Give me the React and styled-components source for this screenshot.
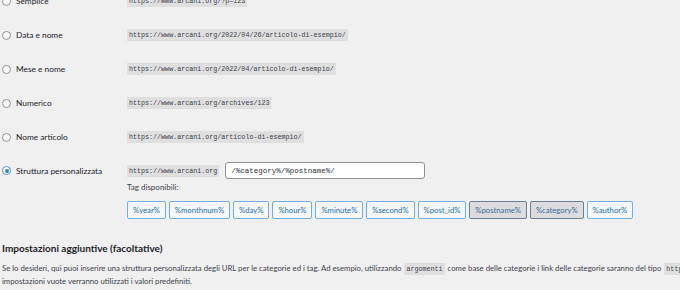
import React from 'react';
import styled, { createGlobalStyle } from 'styled-components';

const Global = createGlobalStyle`
  html, body { margin: 0; padding: 0; background: #f0f0f1; }
  body {
    width: 680px; height: 290px; overflow: hidden;
    font-family: Lato, "Noto Sans", sans-serif;
    color: #1d2327;
  }
`;

const Page = styled.div`
  width: 680px;
  height: 290px;
  overflow: hidden;
  padding-left: 2px;
  box-sizing: border-box;
`;

const Table = styled.div`
  display: flex;
  flex-direction: column;
  margin-top: -16px;
`;

const Row = styled.div`
  display: grid;
  grid-template-columns: 125px 1fr;
  min-height: 34px;
  align-items: ${p => (p.$top ? 'start' : 'center')};
  padding-top: ${p => (p.$top ? '8px' : '0')};
  box-sizing: border-box;
`;

const Label = styled.label`
  display: flex;
  align-items: center;
  gap: 5px;
  height: 17px;
  font-size: 8.3px;
  color: #1d2327;
  white-space: nowrap;
`;

const Radio = styled.span`
  width: 9px;
  height: 9px;
  border-radius: 50%;
  box-sizing: border-box;
  border: 1px solid ${p => (p.$checked ? '#4f94d4' : '#8c8f94')};
  background: #fff;
  display: flex;
  align-items: center;
  justify-content: center;
  flex: none;
  &::after {
    content: '';
    display: ${p => (p.$checked ? 'block' : 'none')};
    width: 4px;
    height: 4px;
    border-radius: 50%;
    background: #3582c4;
  }
`;

const Code = styled.code`
  display: inline-block;
  font-family: "Liberation Mono", "DejaVu Sans Mono", monospace;
  font-size: 6.7px;
  line-height: 8px;
  padding: 2px 2px;
  background: rgba(0, 0, 0, 0.07);
  color: #3c434a;
  white-space: nowrap;
`;

const Value = styled.div`
  display: flex;
  align-items: center;
`;

const Cell = styled.div`
  display: flex;
  flex-direction: column;
  align-items: flex-start;
`;

const Line = styled.div`
  display: flex;
  align-items: center;
  gap: 6px;
  height: 17px;
`;

const Input = styled.div`
  width: 200px;
  height: 17px;
  box-sizing: border-box;
  border: 1px solid #8c8f94;
  border-radius: 3px;
  background: #fff;
  font-family: "Liberation Mono", "DejaVu Sans Mono", monospace;
  font-size: 7.5px;
  color: #2c3338;
  display: flex;
  align-items: center;
  padding: 0 5px;
`;

const Hint = styled.div`
  font-size: 8px;
  line-height: 12px;
  color: #3c434a;
  margin-top: 2px;
`;

const Tags = styled.div`
  display: flex;
  gap: 3px;
  margin-top: 8px;
`;

const Tag = styled.button`
  height: 18px;
  box-sizing: border-box;
  padding: 0 5px;
  border-radius: 2px;
  border: 1px solid ${p => (p.$active ? '#6c7f94' : '#72aee6')};
  background: ${p => (p.$active ? '#dcdcde' : '#f6f7f7')};
  color: ${p => (p.$active ? '#3d6c98' : '#2271b1')};
  font-family: Lato, "Noto Sans", sans-serif;
  font-size: 7.7px;
  line-height: 16px;
  cursor: pointer;
`;

const Heading = styled.h2`
  margin: 21px 0 0;
  font-size: 10px;
  line-height: 16px;
  font-weight: 700;
  color: #1d2327;
`;

const Para = styled.p`
  margin: 6px 0 0;
  font-size: 7.75px;
  line-height: 13px;
  color: #3c434a;
  white-space: nowrap;
  ${Code} {
    margin: 0 3px;
  }
`;

const options = [
  { label: 'Semplice', code: 'https://www.arcani.org/?p=123' },
  { label: 'Data e nome', code: 'https://www.arcani.org/2022/04/26/articolo-di-esempio/' },
  { label: 'Mese e nome', code: 'https://www.arcani.org/2022/04/articolo-di-esempio/' },
  { label: 'Numerico', code: 'https://www.arcani.org/archives/123' },
  { label: 'Nome articolo', code: 'https://www.arcani.org/articolo-di-esempio/' },
];

const tags = [
  '%year%', '%monthnum%', '%day%', '%hour%', '%minute%', '%second%',
  '%post_id%', '%postname%', '%category%', '%author%',
];
const activeTags = ['%postname%', '%category%'];

export default function App() {
  return (
    <>
      <Global />
      <Page>
        <Table>
          {options.map(o => (
            <Row key={o.label}>
              <Label><Radio />{o.label}</Label>
              <Value><Code>{o.code}</Code></Value>
            </Row>
          ))}
          <Row $top>
            <Label><Radio $checked />Struttura personalizzata</Label>
            <Cell>
              <Line>
                <Code>https://www.arcani.org</Code>
                <Input>/%category%/%postname%/</Input>
              </Line>
              <Hint>Tag disponibili:</Hint>
              <Tags>
                {tags.map(t => (
                  <Tag key={t} $active={activeTags.includes(t)}>{t}</Tag>
                ))}
              </Tags>
            </Cell>
          </Row>
        </Table>
        <Heading>Impostazioni aggiuntive (facoltative)</Heading>
        <Para>
          Se lo desideri, qui puoi inserire una struttura personalizzata degli URL per le categorie ed i tag. Ad esempio, utilizzando
          <Code>argomenti</Code>
          come base delle categorie i link delle categorie saranno del tipo
          <Code>https://www.arcani.org/argomenti/senza-categoria/</Code>
          . Se lasci queste
          <br />
          impostazioni vuote verranno utilizzati i valori predefiniti.
        </Para>
      </Page>
    </>
  );
}
